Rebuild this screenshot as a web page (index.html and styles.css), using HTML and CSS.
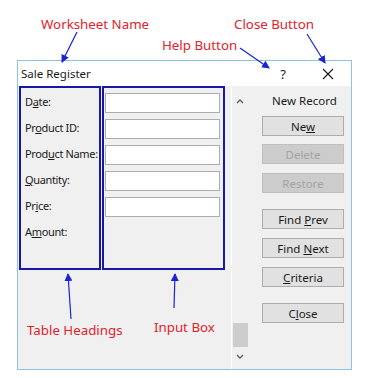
FILE: index.html
```html
<!DOCTYPE html>
<html lang="en">
<head>
    <meta charset="UTF-8">
    <meta name="viewport" content="width=device-width, initial-scale=1.0">
    <title>Sale Register</title>
    <link rel="stylesheet" href="styles.css">
</head>
<body>

    <!-- Data entry form window -->
    <div class="dialog">
        <div class="titlebar">
            <span class="title">Sale Register</span>
            <span class="help">?</span>
            <svg class="close-x" width="12" height="12" viewBox="0 0 12 12">
                <path d="M1 1 L11 11 M11 1 L1 11" stroke="#1a1a1a" stroke-width="1.1" fill="none"/>
            </svg>
        </div>

        <div class="body">
            <div class="headings">
                <div class="label">D<u>a</u>te:</div>
                <div class="label">Pr<u>o</u>duct ID:</div>
                <div class="label">Prod<u>u</u>ct Name:</div>
                <div class="label"><u>Q</u>uantity:</div>
                <div class="label">Pr<u>i</u>ce:</div>
                <div class="label">A<u>m</u>ount:</div>
            </div>

            <div class="inputs">
                <input type="text">
                <input type="text">
                <input type="text">
                <input type="text">
                <input type="text">
            </div>

            <div class="scrollbar">
                <svg class="arrow" width="8" height="6" viewBox="0 0 8 6">
                    <path d="M1 5 L4 2 L7 5" stroke="#606060" stroke-width="1.4" fill="none"/>
                </svg>
                <div class="track"></div>
                <div class="thumb"></div>
                <svg class="arrow" width="8" height="6" viewBox="0 0 8 6">
                    <path d="M1 1 L4 4 L7 1" stroke="#606060" stroke-width="1.4" fill="none"/>
                </svg>
            </div>

            <div class="buttons">
                <div class="record-count">New Record</div>
                <button class="btn btn-new">Ne<u>w</u></button>
                <button class="btn btn-delete" disabled>Delete</button>
                <button class="btn" disabled>Restore</button>
                <button class="btn group-gap">Find <u>P</u>rev</button>
                <button class="btn">Find <u>N</u>ext</button>
                <button class="btn"><u>C</u>riteria</button>
                <button class="btn group-gap">C<u>l</u>ose</button>
            </div>
        </div>
    </div>

    <!-- Annotations over the screenshot -->
    <div class="note note-sheet">Worksheet Name</div>
    <div class="note note-close">Close Button</div>
    <div class="note note-help">Help Button</div>
    <div class="note note-headings">Table Headings</div>
    <div class="note note-input">Input Box</div>

    <svg class="pointers" width="377" height="378" viewBox="0 0 377 378">
        <defs>
            <marker id="head" markerWidth="8" markerHeight="8" refX="7" refY="4" orient="auto" markerUnits="userSpaceOnUse">
                <path d="M0 0 L8 4 L0 8 Z" fill="#1c22d6"/>
            </marker>
        </defs>
        <g stroke="#1c22d6" stroke-width="1.2" fill="none">
            <line x1="77" y1="32" x2="62" y2="62" marker-end="url(#head)"/>
            <line x1="240" y1="48" x2="269" y2="68" marker-end="url(#head)"/>
            <line x1="307" y1="34" x2="325" y2="63" marker-end="url(#head)"/>
            <line x1="71" y1="319" x2="68" y2="274" marker-end="url(#head)"/>
            <line x1="174" y1="308" x2="175" y2="274" marker-end="url(#head)"/>
        </g>
    </svg>

</body>
</html>
```

FILE: styles.css
```css
/* General page */
body {
    margin: 0;
    width: 377px;
    height: 378px;
    background-color: white;
    font-family: "Noto Sans", sans-serif;
    position: relative;
    overflow: hidden;
}

/* Window frame */
.dialog {
    margin: 60px 0 0 17px;
    width: 335px;
    height: 310px;
    box-sizing: border-box;
    border: 1px solid #8cc3ea;
    display: flex;
    flex-direction: column;
}

.titlebar {
    height: 25px;
    background-color: white;
    display: flex;
    align-items: center;
    padding-left: 3px;
    font-size: 11.5px;
    color: #1a1a1a;
}

.title {
    flex: 1;
}

.help {
    font-size: 13px;
    margin-right: 36px;
}

.close-x {
    margin-right: 17px;
}

/* Form body */
.body {
    flex: 1;
    background-color: #f0f0f0;
    display: flex;
    align-items: flex-start;
    padding-left: 1px;
    font-size: 11px;
    color: #1a1a1a;
}

.headings {
    width: 82px;
    height: 184px;
    box-sizing: border-box;
    border: 2px solid #1818a8;
    padding: 1px 0 0 4px;
    overflow: hidden;
}

.label {
    height: 26px;
    line-height: 26px;
    letter-spacing: -0.35px;
    white-space: nowrap;
}

.inputs {
    width: 123px;
    height: 184px;
    box-sizing: border-box;
    margin-left: 1px;
    border: 2px solid #1818a8;
    padding: 5px 0 0 1px;
    display: flex;
    flex-direction: column;
}

.inputs input {
    width: 115px;
    height: 20px;
    box-sizing: border-box;
    margin: 0 0 6px 0;
    border: 1px solid #abadb3;
    background-color: white;
    padding: 0;
}

/* Record scroller */
.scrollbar {
    margin-left: 6px;
    width: 17px;
    height: 283px;
    box-sizing: border-box;
    border-left: 1px solid white;
    display: flex;
    flex-direction: column;
    align-items: center;
}

.scrollbar .arrow {
    margin: 12px 0 0 0;
}

.scrollbar .arrow:last-child {
    margin: 7px 0 0 0;
}

.track {
    height: 219px;
}

.thumb {
    width: 15px;
    height: 24px;
    background-color: #cdcdcd;
}

/* Command buttons */
.buttons {
    margin-left: 14px;
    width: 82px;
    display: flex;
    flex-direction: column;
}

.record-count {
    height: 20px;
    line-height: 20px;
    margin-top: 5px;
    padding-left: 10px;
    font-size: 11.5px;
    white-space: nowrap;
}

.btn {
    width: 82px;
    height: 20px;
    margin-top: 9px;
    padding: 0;
    font-family: "Noto Sans", sans-serif;
    font-size: 11.5px;
    color: #1a1a1a;
    background-color: #e1e1e1;
    border: 1px solid #adadad;
}

.btn-new {
    margin-top: 5px;
}

.btn-delete {
    margin-top: 8px;
}

.btn:disabled {
    background-color: #cccccc;
    border-color: #bfbfbf;
    color: #a3a3a3;
}

.btn.group-gap {
    margin-top: 16px;
}

/* Red annotations */
.note {
    position: absolute;
    color: #e0222c;
    font-size: 13.3px;
    white-space: nowrap;
}

.note-sheet {
    left: 41px;
    top: 15px;
}

.note-close {
    left: 234px;
    top: 15px;
}

.note-help {
    left: 162px;
    top: 36px;
}

.note-headings {
    left: 27px;
    top: 321px;
}

.note-input {
    left: 154px;
    top: 318px;
}

.pointers {
    position: absolute;
    left: 0;
    top: 0;
}
```
